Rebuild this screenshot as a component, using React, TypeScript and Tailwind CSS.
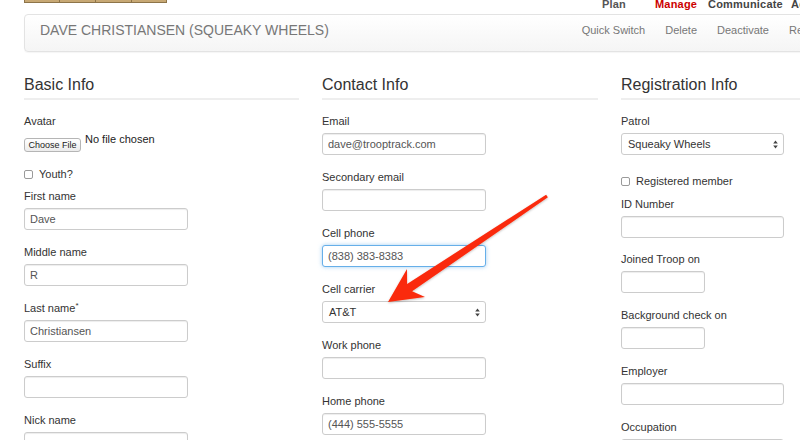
import React from "react";

const Label = ({ children }: { children: React.ReactNode }) => (
  <div className="text-[11px] leading-[13px] text-[#333]">{children}</div>
);

const TextInput = ({
  value = "",
  w = "w-[164px]",
  focus = false,
}: {
  value?: string;
  w?: string;
  focus?: boolean;
}) => (
  <div
    className={
      "mt-[5px] h-[22px] rounded-[3px] border bg-white pl-[5px] text-[11px] leading-[20px] text-[#555] " +
      w +
      (focus
        ? " border-[#66afe9] shadow-[0_0_4px_rgba(102,175,233,0.6)]"
        : " border-[#ccc] shadow-[inset_0_1px_1px_rgba(0,0,0,0.075)]")
    }
  >
    {value}
  </div>
);

const Select = ({ value, w = "w-[164px]" }: { value: string; w?: string }) => (
  <div
    className={
      "mt-[5px] flex h-[22px] items-center justify-between rounded-[3px] border border-[#ccc] bg-white pl-[6px] pr-[5px] text-[11px] text-[#333] " +
      w
    }
  >
    <span>{value}</span>
    <svg width="5" height="9" viewBox="0 0 5 9">
      <path d="M2.5 0.5 L4.8 3.6 H0.2 Z M2.5 8.5 L4.8 5.4 H0.2 Z" fill="#444" />
    </svg>
  </div>
);

const Field = ({
  label,
  children,
  mt = "mt-[16px]",
}: {
  label: React.ReactNode;
  children: React.ReactNode;
  mt?: string;
}) => (
  <div className={mt}>
    <Label>{label}</Label>
    {children}
  </div>
);

const Check = ({ label, mt }: { label: string; mt: string }) => (
  <div className={"flex items-center " + mt}>
    <span className="h-[9px] w-[9px] rounded-[2px] border border-[#9a9a9a] bg-white" />
    <span className="ml-[6px] text-[11px] leading-[13px] text-[#333]">{label}</span>
  </div>
);

const Heading = ({ title }: { title: string }) => (
  <div className="h-[26px] border-b-2 border-[#eee] pt-[2px] text-[16px] leading-[18px] text-[#333]">
    {title}
  </div>
);

export default function App() {
  return (
    <div className="relative h-[440px] w-[800px] overflow-hidden bg-white font-['Liberation_Sans',Arial,sans-serif]">
      {/* top strip */}
      <div className="flex h-[14px] items-start">
        <div className="ml-[24px] flex">
          {[36, 36, 36, 35].map((w, i) => (
            <div
              key={i}
              style={{ width: w }}
              className="h-[3px] border-b border-r border-[#8d7449] bg-[#c7a874] first:border-l"
            />
          ))}
        </div>
        <nav className="-mt-[2px] ml-[435px] flex whitespace-nowrap text-[11px] font-bold leading-[13px] tracking-[0.2px]">
          <span className="w-[53px] text-[#555]">Plan</span>
          <span className="w-[53px] text-[#cc0000]">Manage</span>
          <span className="w-[83px] text-[#444]">Communicate</span>
          <span className="text-[#444]">Admin</span>
        </nav>
      </div>

      {/* header panel */}
      <div className="ml-[24px] mr-[-42px] flex h-[38px] items-start justify-between rounded-[4px] border border-[#e3e3e3] bg-gradient-to-b from-white to-[#f5f5f5] pl-[15px] pt-[7px] shadow-[0_1px_1px_rgba(0,0,0,0.04)]">
        <div className="whitespace-nowrap text-[14px] leading-[17px] text-[#777]">
          DAVE CHRISTIANSEN (SQUEAKY WHEELS)
        </div>
        <div className="flex gap-x-[20px] whitespace-nowrap pt-[2px] text-[11px] leading-[13px] text-[#777]">
          <span>Quick Switch</span>
          <span>Delete</span>
          <span>Deactivate</span>
          <span className="w-[52px]">Reset</span>
        </div>
      </div>

      {/* columns */}
      <div className="mt-[22px] grid grid-cols-[275px_276px_276px] gap-x-[23px] pl-[24px]">
        {/* Basic Info */}
        <div>
          <Heading title="Basic Info" />
          <div className="mt-[15px]">
            <Label>Avatar</Label>
            <div className="mt-[5px] flex items-start">
              <div className="mt-[5px] flex h-[14px] w-[57px] items-center justify-center rounded-[3px] border border-[#b5b5b5] bg-gradient-to-b from-white to-[#ececec] text-[9px] leading-[10px] text-[#222]">
                Choose File
              </div>
              <span className="ml-[4px] text-[11px] leading-[13px] text-[#222]">No file chosen</span>
            </div>
          </div>
          <Check label="Youth?" mt="mt-[16px]" />
          <Field label="First name" mt="mt-[9px]">
            <TextInput value="Dave" />
          </Field>
          <Field label="Middle name">
            <TextInput value="R" />
          </Field>
          <Field
            label={
              <>
                Last name
                <abbr className="align-top text-[8px] leading-[8px] no-underline">*</abbr>
              </>
            }
          >
            <TextInput value="Christiansen" />
          </Field>
          <Field label="Suffix">
            <TextInput />
          </Field>
          <Field label="Nick name">
            <TextInput />
          </Field>
        </div>

        {/* Contact Info */}
        <div>
          <Heading title="Contact Info" />
          <Field label="Email" mt="mt-[15px]">
            <TextInput value="dave@trooptrack.com" />
          </Field>
          <Field label="Secondary email">
            <TextInput />
          </Field>
          <Field label="Cell phone">
            <TextInput value="(838) 383-8383" focus />
          </Field>
          <Field label="Cell carrier">
            <Select value="AT&T" />
          </Field>
          <Field label="Work phone">
            <TextInput />
          </Field>
          <Field label="Home phone">
            <TextInput value="(444) 555-5555" />
          </Field>
        </div>

        {/* Registration Info */}
        <div>
          <Heading title="Registration Info" />
          <Field label="Patrol" mt="mt-[15px]">
            <Select value="Squeaky Wheels" w="w-[163px]" />
          </Field>
          <Check label="Registered member" mt="mt-[20px]" />
          <Field label="ID Number" mt="mt-[10px]">
            <TextInput w="w-[163px]" />
          </Field>
          <Field label="Joined Troop on" mt="mt-[15px]">
            <TextInput w="w-[84px]" />
          </Field>
          <Field label="Background check on">
            <TextInput w="w-[84px]" />
          </Field>
          <Field label="Employer">
            <TextInput w="w-[163px]" />
          </Field>
          <Field label="Occupation">
            <TextInput w="w-[163px]" />
          </Field>
        </div>
      </div>

      {/* annotation arrow */}
      <svg className="pointer-events-none absolute left-0 top-0" width="800" height="440">
        <defs>
          <filter id="sh" x="-10%" y="-10%" width="120%" height="120%">
            <feDropShadow dx="0" dy="1" stdDeviation="1" floodColor="#000" floodOpacity="0.25" />
          </filter>
        </defs>
        <polygon
          points="388,302 425,297 412.1,291.3 547.9,197.3 546.1,194.7 407.1,283.9 407,269"
          fill="#fa2a0a"
          filter="url(#sh)"
        />
      </svg>
    </div>
  );
}
